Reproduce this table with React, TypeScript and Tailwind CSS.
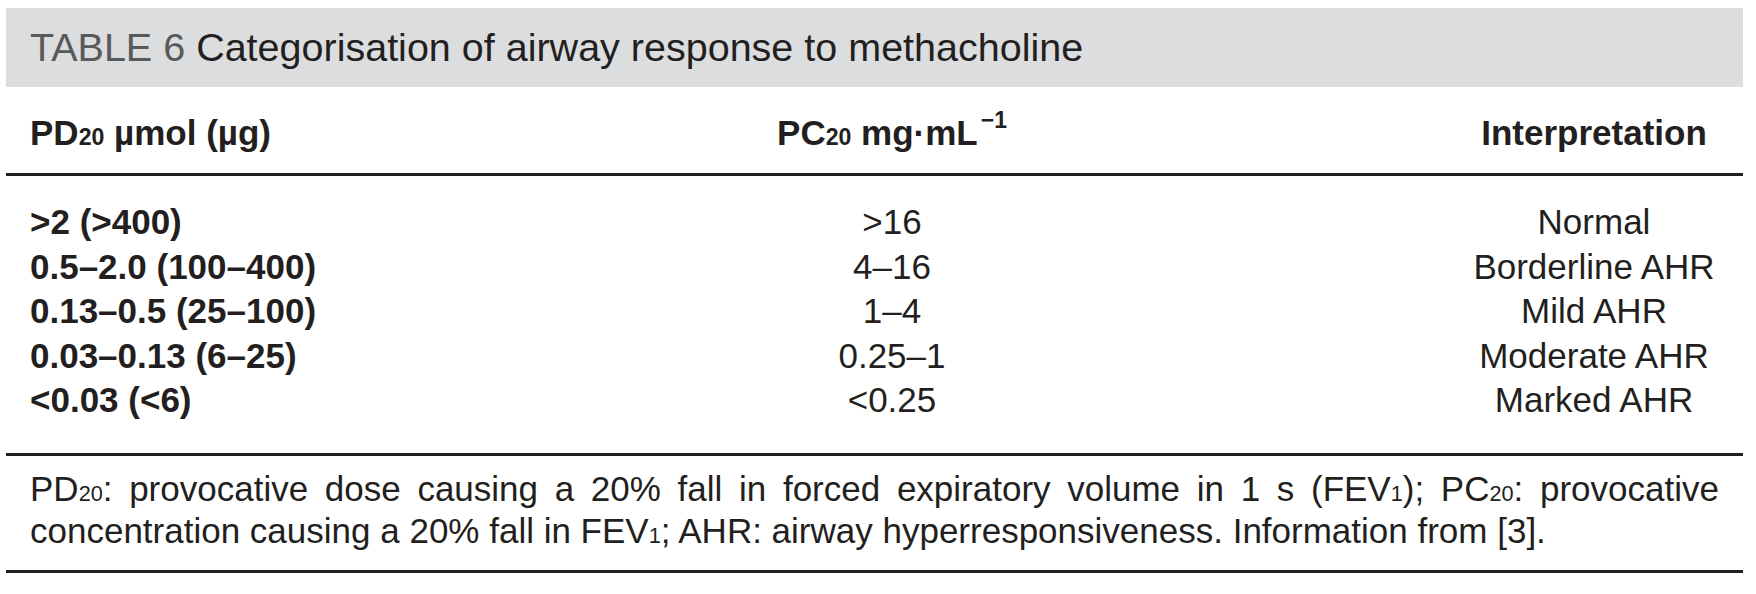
const rows = [
  { dose: '>2 (>400)', conc: '>16', label: 'Normal' },
  { dose: '0.5–2.0 (100–400)', conc: '4–16', label: 'Borderline AHR' },
  { dose: '0.13–0.5 (25–100)', conc: '1–4', label: 'Mild AHR' },
  { dose: '0.03–0.13 (6–25)', conc: '0.25–1', label: 'Moderate AHR' },
  { dose: '<0.03 (<6)', conc: '<0.25', label: 'Marked AHR' },
];

// Inferior figures sitting on the baseline, as in the printed table
function Sub({ children, small }: { children: React.ReactNode; small?: boolean }) {
  return <span className={small ? 'text-[0.62em] leading-none' : 'text-[0.66em] leading-none'}>{children}</span>;
}

export default function App() {
  return (
    <div className="min-h-screen bg-white pt-2 pl-[6px] pr-[13px] text-[#231f20] font-['Liberation_Sans',Arial,sans-serif]">
      {/* Caption */}
      <div className="h-[79px] bg-[#dcdddf] px-6 flex items-center">
        <h1 className="text-[39.5px] leading-[79px] font-normal whitespace-nowrap">
          <span className="text-[#58595b]">TABLE 6</span> Categorisation of airway response to methacholine
        </h1>
      </div>

      {/* Column heads */}
      <div className="flex px-6 pt-[26px] pb-[20px] text-[35px] leading-[40px] font-bold border-b-[3px] border-[#231f20]">
        <div className="w-[560px]">
          PD<Sub>20</Sub> µmol (µg)
        </div>
        <div className="w-[604px] text-center">
          PC<Sub>20</Sub> mg·mL
          <span className="relative -top-[17px] ml-[3px] text-[23px] leading-none font-bold">−1</span>
        </div>
        <div className="ml-auto w-[250px] text-center">Interpretation</div>
      </div>

      {/* Body */}
      <div className="flex flex-col px-6 pt-[24px] pb-[30px] text-[35px] leading-[44.5px] border-b-[3px] border-[#231f20]">
        {rows.map((r) => (
          <div key={r.dose} className="flex">
            <div className="w-[560px] font-bold">{r.dose}</div>
            <div className="w-[604px] text-center">{r.conc}</div>
            <div className="ml-auto w-[250px] text-center whitespace-nowrap">{r.label}</div>
          </div>
        ))}
      </div>

      {/* Footnote */}
      <p className="px-6 pt-[12px] pb-[18px] text-[35px] leading-[42px] text-justify border-b-[3px] border-[#231f20]">
        PD<Sub small>20</Sub>: provocative dose causing a 20% fall in forced expiratory volume in 1 s (FEV
        <Sub small>1</Sub>); PC<Sub small>20</Sub>: provocative concentration causing a 20% fall in FEV
        <Sub small>1</Sub>; AHR: airway hyperresponsiveness. Information from [3].
      </p>
    </div>
  );
}
